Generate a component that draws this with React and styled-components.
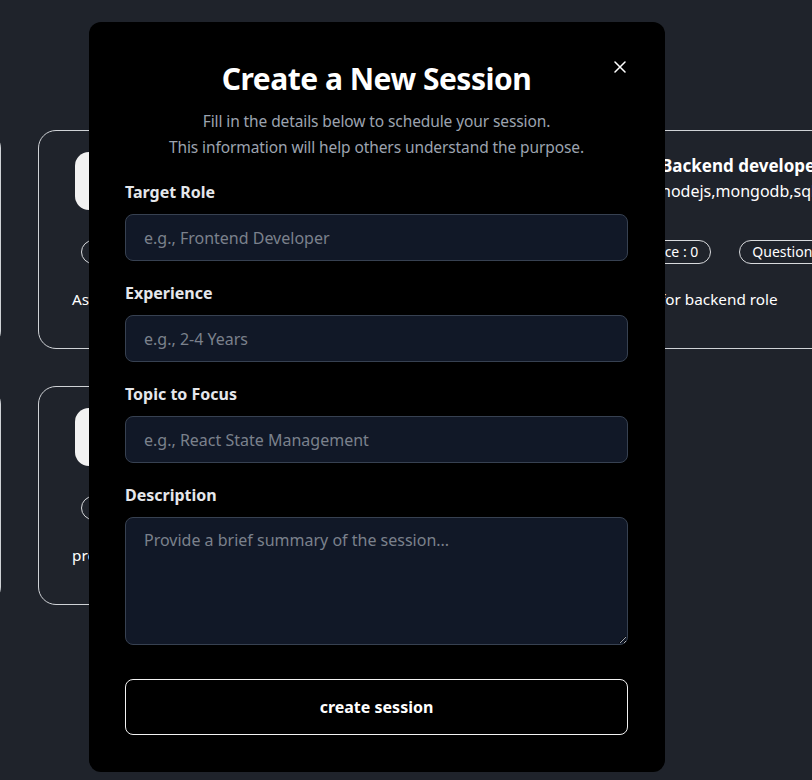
import React from "react";
import styled, { createGlobalStyle } from "styled-components";

const GlobalStyle = createGlobalStyle`
    html, body {
        margin: 0;
        padding: 0;
        background: #1f232b;
        font-family: "Noto Sans", "Open Sans", sans-serif;
        color: #fff;
        overflow: hidden;
    }
    * { box-sizing: border-box; }
`;

const sessions = [
    [
        { initials: "FD", title: "Frontend developer", topics: "react,redux,css", exp: 2, q: 0, desc: "Asking about frontend role" },
        { initials: "FS", title: "Fullstack developer", topics: "mern,express", exp: 1, q: 0, desc: "Asking about fullstack role" },
        { initials: "BD", title: "Backend developer", topics: "nodejs,mongodb,sql", exp: 0, q: 0, desc: "Preparing for backend role" },
    ],
    [
        { initials: "PD", title: "Python developer", topics: "python,django", exp: 3, q: 0, desc: "preparing for python role" },
        { initials: "RD", title: "React developer", topics: "react,nextjs", exp: 1, q: 0, desc: "preparing for react role" },
    ],
];

export default function App() {
    return (
        <>
            <GlobalStyle />
            <Page>
                {sessions.map((row, i) => (
                    <CardRow key={i}>
                        {row.map((s) => (
                            <SessionCard key={s.title}>
                                <CardHead>
                                    <Avatar>{s.initials}</Avatar>
                                    <div>
                                        <CardTitle>{s.title}</CardTitle>
                                        <CardTopics>{s.topics}</CardTopics>
                                    </div>
                                </CardHead>
                                <PillRow>
                                    <Pill>Experience : {s.exp}</Pill>
                                    <Pill>Questions : {s.q}</Pill>
                                </PillRow>
                                <CardDesc>{s.desc}</CardDesc>
                            </SessionCard>
                        ))}
                    </CardRow>
                ))}
            </Page>

            <Modal>
                <CloseButton aria-label="close">
                    <svg width="12" height="12" viewBox="0 0 12 12">
                        <path d="M1 1L11 11M11 1L1 11" stroke="#fff" strokeWidth="1.5" strokeLinecap="round" />
                    </svg>
                </CloseButton>
                <ModalTitle>Create a New Session</ModalTitle>
                <ModalSubtitle>
                    Fill in the details below to schedule your session.
                    <br />
                    This information will help others understand the purpose.
                </ModalSubtitle>

                <Form>
                    <Field>
                        <Label>Target Role</Label>
                        <Input placeholder="e.g., Frontend Developer" />
                    </Field>
                    <Field>
                        <Label>Experience</Label>
                        <Input placeholder="e.g., 2-4 Years" />
                    </Field>
                    <Field>
                        <Label>Topic to Focus</Label>
                        <Input placeholder="e.g., React State Management" />
                    </Field>
                    <Field>
                        <Label>Description</Label>
                        <TextArea placeholder="Provide a brief summary of the session..." />
                    </Field>
                    <SubmitButton type="button">create session</SubmitButton>
                </Form>
            </Modal>
        </>
    );
}

const Page = styled.div`
    width: 812px;
    height: 780px;
    padding-top: 130px;
    display: flex;
    flex-direction: column;
    gap: 37px;
`;

const CardRow = styled.div`
    display: flex;
    gap: 37px;
    margin-left: -475px;
`;

const SessionCard = styled.div`
    flex: 0 0 476px;
    height: 219px;
    border: 1px solid #cfd2d6;
    border-radius: 18px;
    padding: 21px 32px 0 32px;
`;

const CardHead = styled.div`
    display: flex;
    align-items: flex-start;
    gap: 13px;
    padding-left: 4px;
`;

const Avatar = styled.div`
    width: 60px;
    height: 58px;
    border-radius: 14px;
    background: #f2f2f2;
    color: #5a2b2b;
    font-size: 20px;
    font-weight: 700;
    display: flex;
    align-items: center;
    justify-content: center;
`;

const CardTitle = styled.div`
    font-size: 17px;
    font-weight: 700;
    margin-top: 2px;
    line-height: 24px;
`;

const CardTopics = styled.div`
    font-size: 16px;
    line-height: 26px;
`;

const PillRow = styled.div`
    display: flex;
    gap: 28px;
    margin-top: 30px;
    padding-left: 10px;
`;

const Pill = styled.div`
    border: 1px solid #d8dadd;
    border-radius: 999px;
    font-size: 14px;
    line-height: 22px;
    padding: 0 12px;
`;

const CardDesc = styled.div`
    font-size: 15.3px;
    margin-top: 25px;
    padding-left: 1px;
`;

const Modal = styled.div`
    position: absolute;
    left: 89px;
    top: 22px;
    width: 576px;
    height: 750px;
    background: #000;
    border-radius: 12px;
    padding: 34px 37px 0 36px;
`;

const CloseButton = styled.button`
    position: absolute;
    top: 39px;
    right: 39px;
    background: none;
    border: none;
    padding: 0;
    display: flex;
    cursor: pointer;
`;

const ModalTitle = styled.h2`
    margin: 0;
    text-align: center;
    font-size: 30px;
    letter-spacing: -0.5px;
    font-weight: 700;
    line-height: 46px;
`;

const ModalSubtitle = styled.p`
    margin: 6px 0 0;
    text-align: center;
    color: #9ca3af;
    font-size: 15.5px;
    letter-spacing: -0.1px;
    line-height: 26px;
`;

const Form = styled.form`
    margin-top: 20px;
    display: flex;
    flex-direction: column;
    gap: 20px;
`;

const Field = styled.div`
    display: flex;
    flex-direction: column;
    gap: 10px;
`;

const Label = styled.label`
    font-size: 16px;
    font-weight: 700;
    color: #e5e7eb;
    line-height: 24px;
`;

const Input = styled.input`
    height: 47px;
    background: #111827;
    border: 1px solid #374151;
    border-radius: 8px;
    padding: 0 18px;
    color: #fff;
    font-family: inherit;
    font-size: 16px;
    outline: none;

    &::placeholder {
        color: #7b818c;
    }
`;

const TextArea = styled.textarea`
    height: 128px;
    background: #111827;
    border: 1px solid #374151;
    border-radius: 8px;
    padding: 10px 18px;
    color: #fff;
    font-family: inherit;
    font-size: 16px;
    line-height: 24px;
    outline: none;
    resize: vertical;

    &::placeholder {
        color: #7b818c;
    }
`;

const SubmitButton = styled.button`
    margin-top: 14px;
    height: 56px;
    background: #000;
    color: #fff;
    border: 1px solid #f2f2f2;
    border-radius: 8px;
    font-family: inherit;
    font-size: 16px;
    font-weight: 700;
    cursor: pointer;
`;
